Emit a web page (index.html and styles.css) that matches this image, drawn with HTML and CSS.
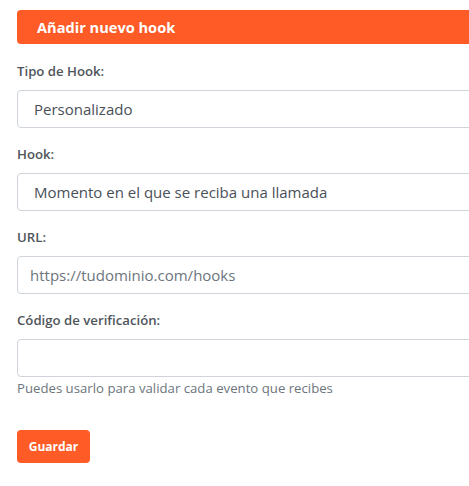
FILE: index.html
```html
<!DOCTYPE html>
<html lang="es">
<head>
<meta charset="utf-8">
<title>Añadir nuevo hook</title>
<link rel="stylesheet" href="styles.css">
</head>
<body>
<div class="panel">
  <div class="panel-header">Añadir nuevo hook</div>
  <form class="form">
    <div class="field">
      <label class="label">Tipo de Hook:</label>
      <div class="control select">Personalizado</div>
    </div>
    <div class="field">
      <label class="label">Hook:</label>
      <div class="control select">Momento en el que se reciba una llamada</div>
    </div>
    <div class="field">
      <label class="label">URL:</label>
      <input class="control input" type="text" placeholder="https://tudominio.com/hooks">
    </div>
    <div class="field">
      <label class="label">Código de verificación:</label>
      <input class="control input" type="text">
      <div class="help">Puedes usarlo para validar cada evento que recibes</div>
    </div>
    <div class="actions">
      <button type="button" class="btn">Guardar</button>
    </div>
  </form>
</div>
</body>
</html>
```
FILE: styles.css
```css
html, body {
  margin: 0;
  padding: 0;
  overflow: hidden;
  background: #ffffff;
}
body {
  font-family: "Open Sans", "Noto Sans", sans-serif;
  color: #495057;
}
.panel {
  width: 520px;
  padding: 10px 0 0 17px;
}
.panel-header {
  height: 34px;
  background: #ff5b27;
  color: #ffffff;
  border-radius: 4px;
  font-weight: 700;
  font-size: 14.6px;
  line-height: 34px;
  padding-left: 20px;
}
.form {
  display: flex;
  flex-direction: column;
}
.field {
  display: flex;
  flex-direction: column;
}
.label {
  font-size: 13.2px;
  font-weight: 600;
  color: #50555b;
  line-height: 18px;
  margin: 17px 0 10px;
}
.field:first-child .label {
  margin-top: 18px;
}
.control {
  box-sizing: border-box;
  height: 38px;
  border: 1px solid #ced4da;
  border-radius: 4px;
  background: #fff;
  font-family: inherit;
  font-size: 15px;
  color: #495057;
  width: 100%;
  margin: 0;
}
.select {
  display: flex;
  align-items: center;
  padding-left: 16px;
}
.input {
  padding: 0 12px;
  outline: none;
}
.input::placeholder {
  color: #6c757d;
}
.help {
  font-size: 13.2px;
  color: #6c757d;
  line-height: 18px;
  margin-top: 2px;
}
.actions {
  margin-top: 33px;
}
.btn {
  height: 33px;
  width: 73px;
  border: none;
  border-radius: 4px;
  background: #ff5b27;
  color: #fff;
  font-family: inherit;
  font-weight: 700;
  font-size: 12px;
  padding: 0;
}
```
